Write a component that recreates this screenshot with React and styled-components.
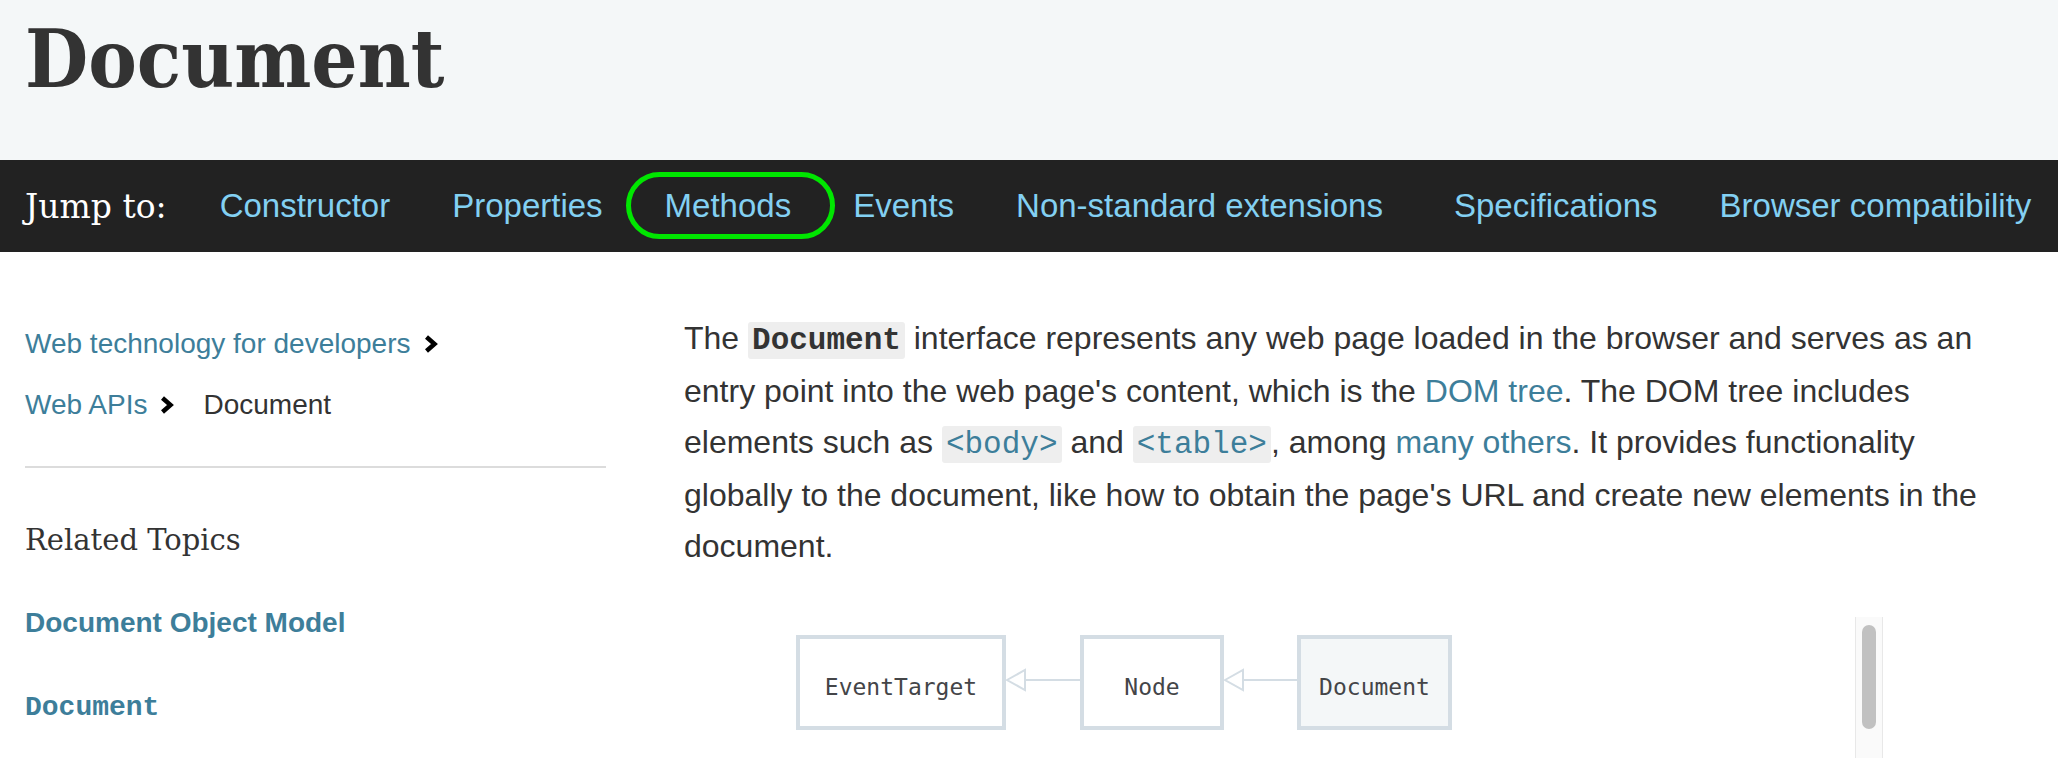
import React from "react";
import styled, { createGlobalStyle, css } from "styled-components";

const SANS = `"Liberation Sans", Arial, sans-serif`;
const SERIF = `"DejaVu Serif", serif`;
const MONO = `"Liberation Mono", "Courier New", monospace`;

const GlobalStyle = createGlobalStyle`
  html, body { margin: 0; padding: 0; background: #fff; overflow: hidden; }
  body { font-family: ${SANS}; color: #333; }
  *, *::before, *::after { box-sizing: border-box; }
`;

const Header = styled.header`
  background: #f4f7f8;
  height: 160px;
  padding: 18px 25px 0;
`;

const Title = styled.h1`
  margin: 0;
  font-family: "DejaVu Serif Condensed", "DejaVu Serif", serif;
  font-stretch: condensed;
  font-weight: 700;
  font-size: 81px;
  line-height: 81px;
  color: #333;
`;

const JumpBar = styled.nav`
  display: flex;
  align-items: center;
  height: 92px;
  background: #222;
  padding-left: 25px;
`;

const JumpLabel = styled.span`
  font-family: ${SERIF};
  font-size: 33px;
  color: #fff;
  margin-right: 53px;
`;

const JumpList = styled.ul`
  display: flex;
  gap: 62px;
  margin: 0;
  padding: 0;
  list-style: none;
`;

const JumpItem = styled.li`
  margin-right: ${(p) => p.$extra || 0}px;
`;

const JumpLink = styled.a`
  position: relative;
  display: block;
  font-size: 33px;
  color: #83d0f2;
  text-decoration: none;
  ${(p) =>
    p.$circled &&
    css`
      &::after {
        content: "";
        position: absolute;
        left: -39px;
        right: -44px;
        top: -15px;
        bottom: -14px;
        border: 5px solid #00e600;
        border-radius: 36px;
      }
    `}
`;

const Body = styled.div`
  display: flex;
  padding-left: 25px;
`;

const Sidebar = styled.aside`
  flex: 0 0 581px;
  padding-top: 61px;
`;

const Crumbs = styled.ol`
  list-style: none;
  margin: 0;
  padding: 0;
`;

const Crumb = styled.li`
  display: flex;
  align-items: center;
  height: 61px;
  font-size: 28px;
`;

const CrumbLink = styled.a`
  color: #3d7e9a;
  text-decoration: none;
`;

const ChevronIcon = styled.svg`
  width: 15px;
  height: 20px;
  margin-left: 12px;
  flex: none;
`;

const Current = styled.span`
  color: #333;
  margin-left: 29px;
`;

const Divider = styled.hr`
  margin: 31px 0 0;
  border: 0;
  height: 2px;
  background: #dcdcdc;
`;

const SideHeading = styled.h3`
  margin: 52px 0 0;
  font-family: ${SERIF};
  font-weight: 400;
  font-size: 29px;
  line-height: 40px;
  color: #333;
`;

const TopicLink = styled.a`
  display: block;
  margin-top: ${(p) => p.$gap}px;
  font-family: ${(p) => (p.$mono ? MONO : SANS)};
  font-size: 28px;
  font-weight: 700;
  line-height: 40px;
  color: #3d7e9a;
  text-decoration: none;
`;

const Main = styled.main`
  margin-left: 78px;
  padding-top: 61px;
  width: 1326px;
`;

const Intro = styled.p`
  margin: 0;
  font-size: 32px;
  line-height: 51px;
  color: #333;
`;

const Code = styled.code`
  font-family: ${MONO};
  font-size: 31px;
  padding: 1px 4px;
  background: #eee;
  border-radius: 3px;
  font-weight: ${(p) => (p.$bold ? 700 : 400)};
  color: ${(p) => (p.$link ? "#3d7e9a" : "#333")};
`;

const TextLink = styled.a`
  color: #3d7e9a;
  text-decoration: none;
`;

const DiagramRow = styled.div`
  display: flex;
  margin-top: 45px;
  width: 1199px;
  height: 170px;
`;

const DiagramCanvas = styled.svg`
  flex: 1;
  height: 144px;
  display: block;
`;

const ScrollTrack = styled.div`
  width: 28px;
  background: #fafafa;
  border-left: 1px solid #e8e8e8;
  border-right: 1px solid #e8e8e8;
  padding: 8px 6px 0 6px;
`;

const ScrollThumb = styled.div`
  height: 104px;
  border-radius: 8px;
  background: #c1c1c1;
`;

const Chevron = () => (
  <ChevronIcon viewBox="0 0 15 20">
    <path d="M3.5 3 L11.5 10 L3.5 17" fill="none" stroke="#000" strokeWidth="4.5" strokeLinejoin="miter" />
  </ChevronIcon>
);

const BOX = "#d4dde4";

const ClassBox = ({ x, w, label, filled }) => (
  <g>
    <rect x={x + 2} y={20} width={w - 4} height={91} fill={filled ? "#f4f7f8" : "#fff"} stroke={BOX} strokeWidth="4" />
    <text
      x={x + w / 2}
      y={78}
      textAnchor="middle"
      fontFamily='"DejaVu Sans Mono", monospace'
      fontSize="23"
      fill="#444548"
    >
      {label}
    </text>
  </g>
);

const Inherit = ({ from, to }) => (
  <g>
    <line x1={from + 19} y1={63} x2={to} y2={63} stroke={BOX} strokeWidth="2" />
    <polygon points={`${from + 1},63 ${from + 19},53 ${from + 19},73`} fill="#fff" stroke={BOX} strokeWidth="2" />
  </g>
);

const jumpItems = [
  { label: "Constructor" },
  { label: "Properties" },
  { label: "Methods", circled: true },
  { label: "Events" },
  { label: "Non-standard extensions", extra: 9 },
  { label: "Specifications" },
  { label: "Browser compatibility" },
];

export default function App() {
  return (
    <>
      <GlobalStyle />
      <Header>
        <Title>Document</Title>
      </Header>
      <JumpBar>
        <JumpLabel>Jump to:</JumpLabel>
        <JumpList>
          {jumpItems.map((item) => (
            <JumpItem key={item.label} $extra={item.extra}>
              <JumpLink href="#" $circled={item.circled}>
                {item.label}
              </JumpLink>
            </JumpItem>
          ))}
        </JumpList>
      </JumpBar>
      <Body>
        <Sidebar>
          <Crumbs>
            <Crumb>
              <CrumbLink href="#">Web technology for developers</CrumbLink>
              <Chevron />
            </Crumb>
            <Crumb>
              <CrumbLink href="#">Web APIs</CrumbLink>
              <Chevron />
              <Current>Document</Current>
            </Crumb>
          </Crumbs>
          <Divider />
          <SideHeading>Related Topics</SideHeading>
          <TopicLink href="#" $gap={43}>
            Document Object Model
          </TopicLink>
          <TopicLink href="#" $gap={45} $mono>
            Document
          </TopicLink>
        </Sidebar>
        <Main>
          <Intro>
            The <Code $bold>Document</Code> interface represents any web page loaded in the browser and serves as an
            entry point into the web page's content, which is the <TextLink href="#">DOM tree</TextLink>. The DOM tree
            includes elements such as <Code $link>&lt;body&gt;</Code> and <Code $link>&lt;table&gt;</Code>, among{" "}
            <TextLink href="#">many others</TextLink>. It provides functionality globally to the document, like how to
            obtain the page's URL and create new elements in the document.
          </Intro>
          <DiagramRow>
            <DiagramCanvas viewBox="0 0 1171 144">
              <ClassBox x={112} w={210} label="EventTarget" />
              <Inherit from={322} to={396} />
              <ClassBox x={396} w={144} label="Node" />
              <Inherit from={540} to={613} />
              <ClassBox x={613} w={155} label="Document" filled />
            </DiagramCanvas>
            <ScrollTrack>
              <ScrollThumb />
            </ScrollTrack>
          </DiagramRow>
        </Main>
      </Body>
    </>
  );
}
